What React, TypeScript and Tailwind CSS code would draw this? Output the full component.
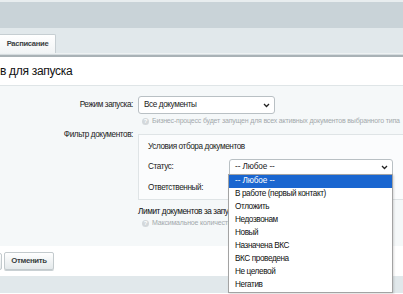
import React from "react";

const options = [
  "-- Любое --",
  "В работе (первый контакт)",
  "Отложить",
  "Недозвонам",
  "Новый",
  "Назначена ВКС",
  "ВКС проведена",
  "Не целевой",
  "Негатив",
];

function Chevron() {
  return (
    <svg width="7" height="5" viewBox="0 0 7 5" className="shrink-0">
      <path d="M1 1 L3.5 3.5 L6 1" fill="none" stroke="#222" strokeWidth="1.3" />
    </svg>
  );
}

function Hint({ text }: { text: string }) {
  return (
    <div className="flex items-center gap-[3px] h-[10px] pl-[4px] text-[7px] tracking-[-0.18px] text-[#a3a9ac] whitespace-nowrap">
      <span className="w-[7px] h-[7px] rounded-full bg-[#d3d8db] text-white text-[6px] leading-[7px] text-center font-bold tracking-normal">
        ?
      </span>
      {text}
    </div>
  );
}

export default function App() {
  return (
    <div
      className="relative w-[403px] h-[294px] overflow-hidden bg-white text-[#222] tracking-[-0.4px]"
      style={{ fontFamily: '"Liberation Sans", Arial, sans-serif' }}
    >
      <div className="h-[2px] bg-[#e8edef]" />
      <div className="h-[26px] bg-[#c9d3d8]" />
      <div className="h-[26px] bg-[#e1e8eb] flex items-end border-b border-[#eef2f3]">
        <div className="h-[19px] w-[56px] bg-gradient-to-b from-white to-[#f1f4f5] border-r border-t border-[#c6ced2] flex items-center justify-center text-[7.6px] font-bold text-[#3a3f42] rounded-tr-[2px] tracking-[-0.3px]">
          Расписание
        </div>
      </div>
      <div className="h-[3px] bg-[#a9b2b6] border-t border-[#d5dcdf]" />
      <div className="h-[28px] flex items-center text-[12px] tracking-[-0.3px] text-[#111]">в для запуска</div>

      <div className="h-[161px] bg-[#f5f8f9] border-t border-[#dfe5e7] pt-[10px]">
        <div className="grid grid-cols-[138px_1fr] text-[8.2px]">
          <div className="h-[18px] flex items-center justify-end pr-[5px]">Режим запуска:</div>
          <div>
            <div className="h-[18px] w-[137px] bg-white border border-[#b9c0c4] rounded-[3px] flex items-center justify-between pl-[5px] pr-[4px]">
              Все документы
              <Chevron />
            </div>
          </div>
          <div />
          <div className="pt-[2px]">
            <Hint text="Бизнес-процесс будет запущен для всех активных документов выбранного типа" />
          </div>

          <div className="pt-[4px] flex justify-end pr-[5px] leading-[10px]">Фильтр документов:</div>
          <div className="pt-[8px]">
            <div className="w-[300px] h-[66px] bg-white/60 border border-[#dfe4e6] pl-[9px]">
              <div className="h-[24px] flex items-center pt-[1px]">Условия отбора документов</div>
              <div className="h-[16px] flex items-center">
                <span className="w-[81px]">Статус:</span>
                <div className="h-[16px] w-[164px] bg-white border border-[#b9c0c4] rounded-t-[3px] flex items-center justify-between pl-[5px] pr-[4px] tracking-[-0.1px]">
                  -- Любое --
                  <Chevron />
                </div>
              </div>
              <div className="h-[22px] flex items-center pt-[4px]">Ответственный:</div>
            </div>
          </div>

          <div />
          <div className="pt-[7px]">
            <div className="h-[11px] flex items-center text-[#111]">Лимит документов за запуск</div>
            <Hint text="Максимальное количество документов" />
          </div>
        </div>
      </div>

      <div className="h-[30px] flex items-center ml-[-50px] gap-[2px]">
        <div className="h-[17px] w-[52px] border border-[#c3cacd] rounded-[2px] bg-gradient-to-b from-white to-[#e6eaec]" />
        <div className="h-[18px] w-[50px] border border-[#c3cacd] rounded-[2px] bg-gradient-to-b from-white to-[#e4e9eb] shadow-[0_1px_0_#c9d0d3] flex items-center justify-center text-[7.8px] font-bold text-[#3a3f42] tracking-[-0.3px]">
          Отменить
        </div>
      </div>
      <div className="h-[17px] bg-[#e1e8eb]" />

      <div className="absolute left-[228px] top-[174px] w-[165px] bg-white border border-[#a3a3a3] shadow-[1px_1px_2px_rgba(0,0,0,0.15)] text-[8.2px]">
        {options.map((o, i) => (
          <div
            key={o}
            className={
              "h-[13px] flex items-center pl-[6px] " +
              (i === 0 ? "bg-[#1a66d0] text-white tracking-[-0.1px]" : "text-[#111]")
            }
          >
            {o}
          </div>
        ))}
      </div>
    </div>
  );
}
